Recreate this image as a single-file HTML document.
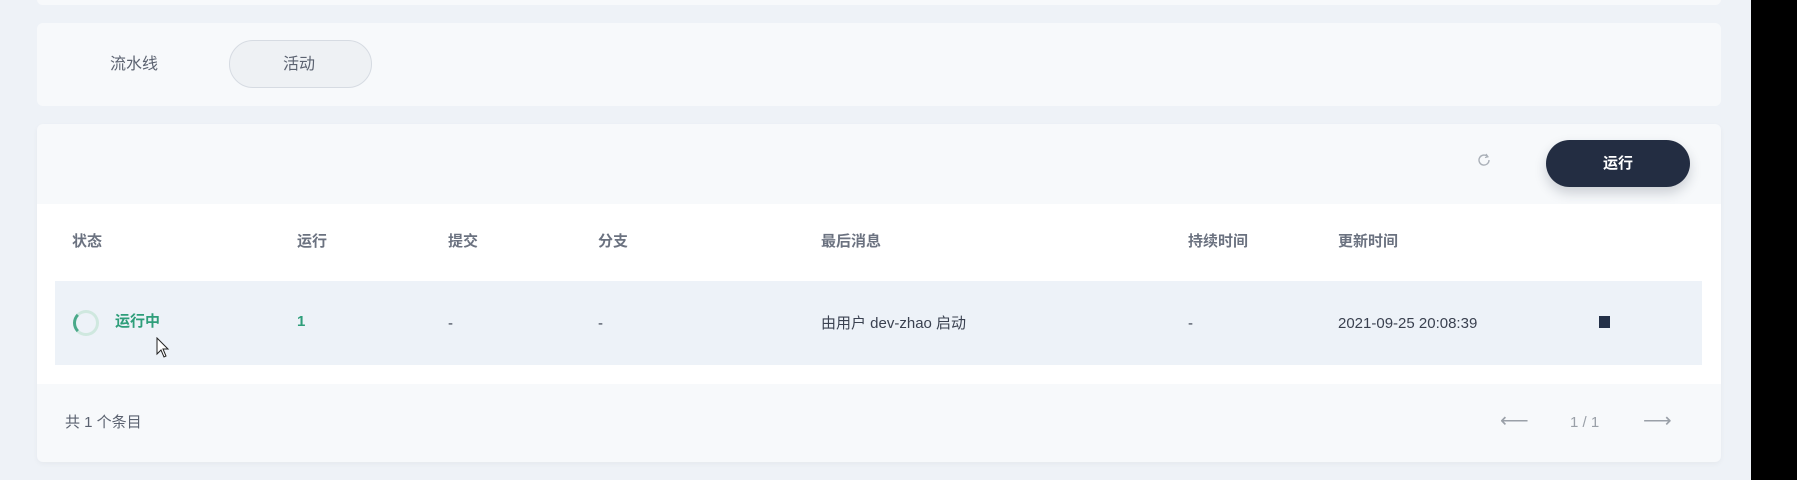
<!DOCTYPE html>
<html><head><meta charset="utf-8"><style>
*{box-sizing:border-box;margin:0;padding:0}
body{width:1797px;height:480px;overflow:hidden;background:#eef2f7;font-family:"Liberation Sans","Noto Sans CJK SC",sans-serif;position:relative;color:#3a4150}
.card{position:absolute;left:37px;width:1684px;background:#f7f9fb;border-radius:6px}
.blk{position:absolute;left:1751px;top:0;width:46px;height:480px;background:#000}
.t{position:absolute;font-size:15px;line-height:18px;white-space:nowrap}
.h{color:#6b7280;font-weight:600;font-size:15px}
</style></head><body>
<div class="card" style="top:-6px;height:11px"></div>
<div class="card" style="top:23px;height:83px"></div>
<div class="t" style="left:110px;top:56px;color:#5b6270;font-size:16px">流水线</div>
<div style="position:absolute;left:229px;top:40px;width:143px;height:48px;border:1px solid #d6dbe2;border-radius:24px;background:#eef1f4"></div>
<div class="t" style="left:283px;top:56px;color:#5b6270;font-size:16px">活动</div>

<div class="card" style="top:124px;height:338px;box-shadow:0 2px 6px rgba(0,0,0,.04)"></div>
<svg style="position:absolute;left:1476px;top:152px" width="16" height="16" viewBox="0 0 16 16"><path d="M11.5 4.5A5 5 0 1 0 13 8" fill="none" stroke="#aab0b8" stroke-width="1.4"/><path d="M10 2l2 2.8-3 .8" fill="none" stroke="#aab0b8" stroke-width="1.2"/></svg>
<div style="position:absolute;left:1546px;top:140px;width:144px;height:47px;border-radius:24px;background:#232d42;box-shadow:0 6px 12px rgba(30,40,60,.2);color:#fff;font-weight:bold;font-size:15px;text-align:center;line-height:47px">运行</div>
<div style="position:absolute;left:37px;top:204px;width:1684px;height:180px;background:#fff"></div>
<div class="t h" style="left:72px;top:233px">状态</div>
<div class="t h" style="left:297px;top:233px">运行</div>
<div class="t h" style="left:448px;top:233px">提交</div>
<div class="t h" style="left:598px;top:233px">分支</div>
<div class="t h" style="left:821px;top:233px">最后消息</div>
<div class="t h" style="left:1188px;top:233px">持续时间</div>
<div class="t h" style="left:1338px;top:233px">更新时间</div>
<div style="position:absolute;left:55px;top:281px;width:1647px;height:84px;background:#edf2f8"></div>
<div style="position:absolute;left:73px;top:310px;width:26px;height:26px;border-radius:50%;border:3px solid #cfe8df;border-left-color:#4aa98a"></div>
<div class="t" style="left:115px;top:313px;color:#2e9e7a;font-weight:bold">运行中</div>
<svg style="position:absolute;left:156px;top:337px" width="14" height="22" viewBox="0 0 14 22"><path d="M1 1v16l4-4 3 7 2-1-3-7h5z" fill="#fff" stroke="#222" stroke-width="1"/></svg>
<div class="t" style="left:297px;top:313px;color:#2e9e7a;font-weight:bold">1</div>
<div class="t" style="left:448px;top:315px">-</div>
<div class="t" style="left:598px;top:315px">-</div>
<div class="t" style="left:821px;top:315px">由用户 dev-zhao 启动</div>
<div class="t" style="left:1188px;top:315px">-</div>
<div class="t" style="left:1338px;top:315px">2021-09-25 20:08:39</div>
<div style="position:absolute;left:1599px;top:316px;width:11px;height:12px;background:#233048"></div>
<div class="t" style="left:65px;top:414px;color:#5b6270">共 1 个条目</div>
<div class="t" style="left:1500px;top:412px;color:#9aa0a8;font-size:20px">⟵</div>
<div class="t" style="left:1570px;top:414px;color:#9aa0a8">1 / 1</div>
<div class="t" style="left:1643px;top:412px;color:#9aa0a8;font-size:20px">⟶</div>
<div class="blk"></div>
</body></html>
